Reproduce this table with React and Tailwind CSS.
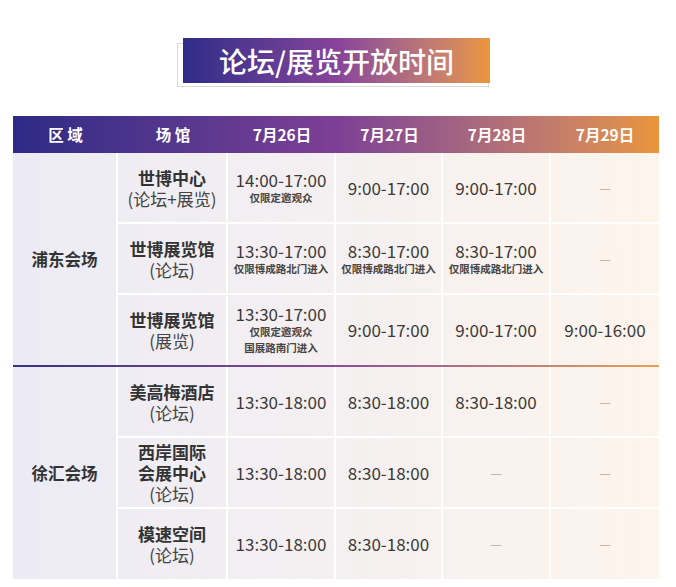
import React from "react";

const font = { fontFamily: '"Noto Sans CJK SC", "Noto Sans", sans-serif' };

const cols = "grid grid-cols-[105px_110px_108px_107px_108px_108px]";

const sections = [
  {
    region: "浦东会场",
    rows: [
      {
        venue: ["世博中心"],
        sub: "(论坛+展览)",
        times: [
          { t: "14:00-17:00", notes: ["仅限定邀观众"] },
          { t: "9:00-17:00" },
          { t: "9:00-17:00" },
          null,
        ],
      },
      {
        venue: ["世博展览馆"],
        sub: "(论坛)",
        times: [
          { t: "13:30-17:00", notes: ["仅限博成路北门进入"] },
          { t: "8:30-17:00", notes: ["仅限博成路北门进入"] },
          { t: "8:30-17:00", notes: ["仅限博成路北门进入"] },
          null,
        ],
      },
      {
        venue: ["世博展览馆"],
        sub: "(展览)",
        times: [
          { t: "13:30-17:00", notes: ["仅限定邀观众", "国展路南门进入"] },
          { t: "9:00-17:00" },
          { t: "9:00-17:00" },
          { t: "9:00-16:00" },
        ],
      },
    ],
  },
  {
    region: "徐汇会场",
    rows: [
      {
        venue: ["美高梅酒店"],
        sub: "(论坛)",
        times: [{ t: "13:30-18:00" }, { t: "8:30-18:00" }, { t: "8:30-18:00" }, null],
      },
      {
        venue: ["西岸国际", "会展中心"],
        sub: "(论坛)",
        times: [{ t: "13:30-18:00" }, { t: "8:30-18:00" }, null, null],
      },
      {
        venue: ["模速空间"],
        sub: "(论坛)",
        times: [{ t: "13:30-18:00" }, { t: "8:30-18:00" }, null, null],
      },
    ],
  },
];

function TimeCell({ cell, last, lastRow }) {
  return (
    <div
      className={`flex flex-col items-center justify-center border-white ${last ? "" : "border-r-2"} ${lastRow ? "" : "border-b-2"}`}
    >
      {cell ? (
        <>
          <span className="text-[17px] leading-[20px] text-[#3a3a3a]">{cell.t}</span>
          {cell.notes &&
            cell.notes.map((n) => (
              <span key={n} className="text-[10.5px] leading-[16px] font-bold text-[#444] whitespace-nowrap">
                {n}
              </span>
            ))}
        </>
      ) : (
        <span className="text-[13px] text-[#aaaaaa]">—</span>
      )}
    </div>
  );
}

function Section({ section }) {
  return (
    <div className={`${cols} grid-rows-[71px_71px_70px]`}>
      <div className="row-span-3 flex items-center justify-center border-r-2 border-white text-[16.5px] font-bold text-[#333]">
        {section.region}
      </div>
      {section.rows.map((r, ri) => {
        const lastRow = ri === section.rows.length - 1;
        return (
          <React.Fragment key={ri}>
            <div
              className={`flex flex-col items-center justify-center border-r-2 border-white ${lastRow ? "" : "border-b-2"}`}
            >
              {r.venue.map((v) => (
                <span key={v} className="text-[17px] leading-[21px] font-bold text-[#333]">
                  {v}
                </span>
              ))}
              <span className="text-[17px] leading-[21px] text-[#444]">{r.sub}</span>
            </div>
            {r.times.map((c, ci) => (
              <TimeCell key={ci} cell={c} last={ci === 3} lastRow={lastRow} />
            ))}
          </React.Fragment>
        );
      })}
    </div>
  );
}

export default function App() {
  const heads = ["区 域", "场 馆", "7月26日", "7月27日", "7月28日", "7月29日"];
  return (
    <div className="w-[676px] h-[587px] bg-white overflow-hidden" style={font}>
      <div className="pt-[38px] pl-[183px]">
        <div className="relative w-[307px] h-[45px]">
          <div className="absolute left-[-6px] top-[5px] w-[312px] h-[44px] border-[1.5px] border-[#d9d9d9]"></div>
          <div className="relative h-full flex items-center justify-center bg-linear-to-r from-[#2e2c88] via-[#87439a] to-[#ea973a] text-white text-[28px] font-medium">
            论坛/展览开放时间
          </div>
        </div>
      </div>

      <div className="mt-[33px] ml-[13px] w-[646px]">
        <div className={`${cols} h-[37px] bg-linear-to-r from-[#2d2a85] via-[#7d3f95] via-50% to-[#e9953a] text-white text-[15.5px] font-bold`}>
          {heads.map((h) => (
            <div key={h} className="flex items-center justify-center whitespace-pre">
              {h}
            </div>
          ))}
        </div>
        <div className="bg-linear-to-r from-[#ecebf5] to-[#fdf4ec]">
          <Section section={sections[0]} />
          <div className="h-[2px] bg-linear-to-r from-[#34327e] via-[#8c4d96] to-[#e6a24e]"></div>
          <Section section={sections[1]} />
        </div>
      </div>
    </div>
  );
}
